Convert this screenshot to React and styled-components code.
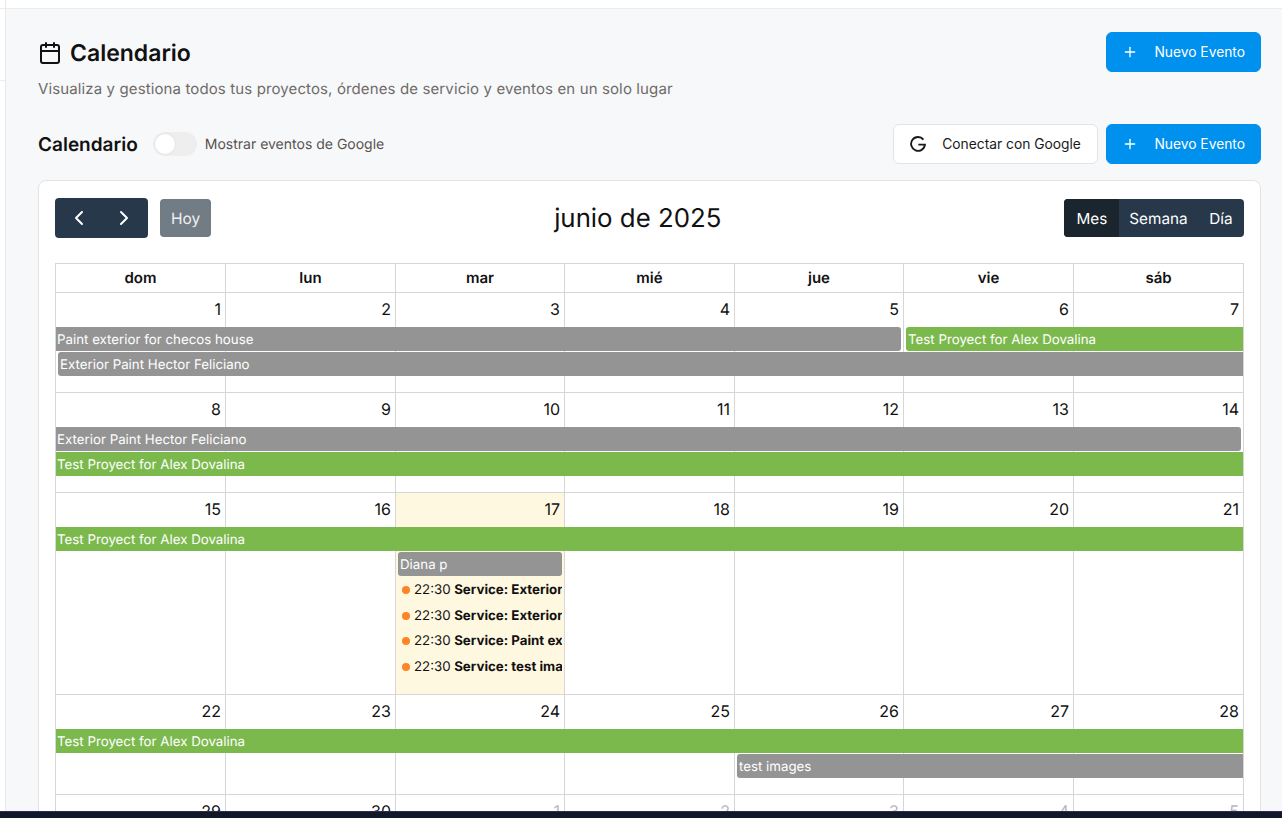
import React from 'react'
import styled, { createGlobalStyle } from 'styled-components'
import { Calendar, Plus, ChevronLeft, ChevronRight } from 'lucide-react'

const GlobalStyle = createGlobalStyle`
  html, body {
    margin: 0;
    height: 100%;
    overflow: hidden;
  }
  body {
    font-family: Inter, "Liberation Sans", sans-serif;
    text-rendering: geometricPrecision;
    color: #111;
    background: #f7f8fa;
  }
  * {
    box-sizing: border-box;
  }
`

const Shell = styled.div`
  height: 100vh;
  display: flex;
  flex-direction: column;
  overflow: hidden;
`

const Body = styled.div`
  flex: 1;
  min-height: 0;
  display: flex;
`

const Sidebar = styled.aside`
  width: 6px;
  flex-shrink: 0;
  background: #fff;
  border-right: 1px solid #e8e8e8;
`

const SidebarRow = styled.div`
  height: ${p => p.$h}px;
  border-bottom: 1px solid #ececec;
`

const Column = styled.div`
  flex: 1;
  min-width: 0;
  display: flex;
  flex-direction: column;
`

const TopBar = styled.div`
  height: 9px;
  flex-shrink: 0;
  background: #fff;
  border-bottom: 1px solid #ececec;
`

const Main = styled.main`
  flex: 1;
  min-height: 0;
  overflow: hidden;
  padding: 23px 21px 0 32px;
`

const HeaderRow = styled.div`
  display: flex;
  justify-content: space-between;
  align-items: flex-start;
`

const TitleRow = styled.div`
  display: flex;
  align-items: center;
  gap: 8px;
  height: 42px;
`

const PageTitle = styled.h1`
  margin: 0;
  font-size: 23px;
  font-weight: 600;
`

const Subtitle = styled.p`
  margin: 4px 0 0;
  font-size: 15px;
  letter-spacing: 0.12px;
  line-height: 22px;
  color: #6f6b68;
`

const Toolbar = styled.div`
  display: flex;
  justify-content: space-between;
  align-items: center;
  margin-top: 24px;
`

const ToolbarLeft = styled.div`
  display: flex;
  align-items: center;
`

const SectionTitle = styled.h2`
  margin: 0 15px 0 0;
  font-size: 19px;
  font-weight: 600;
`

const Toggle = styled.div`
  width: 44px;
  height: 24px;
  padding: 2px;
  border-radius: 12px;
  background: #eeeeee;
  margin-right: 8px;
`

const Thumb = styled.div`
  width: 20px;
  height: 20px;
  border-radius: 50%;
  background: #fff;
  box-shadow: 0 0 3px rgba(0, 0, 0, 0.08);
`

const ToggleLabel = styled.span`
  font-size: 14px;
  color: #57534e;
`

const ButtonRow = styled.div`
  display: flex;
  gap: 8px;
`

const ActionButton = styled.button`
  height: 40px;
  display: flex;
  align-items: center;
  gap: 16px;
  padding: 0 ${p => (p.$primary ? 15 : 16.5)}px 1px;
  border-radius: 6px;
  font-family: inherit;
  font-size: 13.8px;
  font-weight: 400;
  border: 1px solid ${p => (p.$primary ? '#0090ee' : '#e4e4e4')};
  background: ${p => (p.$primary ? '#0090ee' : '#fff')};
  color: ${p => (p.$primary ? '#fff' : '#1a1a1a')};
`

const Card = styled.section`
  margin-top: 16px;
  padding: 17px 16px 0;
  background: #fff;
  border: 1px solid #e6e4e2;
  border-radius: 8px;
`

const CalendarHeader = styled.div`
  display: flex;
  justify-content: space-between;
  align-items: center;
  height: 40px;
  margin-bottom: 25px;
`

const HeaderSide = styled.div`
  display: flex;
  align-items: center;
`

const NavGroup = styled.div`
  display: flex;
  width: 93px;
  height: 40px;
  padding: 0 1px;
  border-radius: 4px;
  background: #27384a;
  color: #fff;
  margin-right: 12px;
`

const NavButton = styled.div`
  flex: 1;
  display: flex;
  align-items: center;
  justify-content: center;
`

const TodayButton = styled.div`
  width: 51px;
  height: 38px;
  display: flex;
  align-items: center;
  justify-content: center;
  border-radius: 4px;
  background: #727c85;
  color: #eef0f1;
  font-size: 15.5px;
`

const MonthTitle = styled.h2`
  margin: 0;
  padding-top: 2px;
  font-size: 25.8px;
  font-weight: 400;
  line-height: 40px;
`

const ViewGroup = styled.div`
  display: flex;
  height: 38px;
  border-radius: 4px;
  overflow: hidden;
  background: #27384a;
`

const ViewButton = styled.div`
  display: flex;
  align-items: center;
  padding: 0 ${p => p.$pad}px;
  font-size: 15.3px;
  color: #fff;
  background: ${p => (p.$active ? '#1a252d' : 'transparent')};
`

const Table = styled.div`
  border-top: 1px solid #d6d6d6;
  border-left: 1px solid #d6d6d6;
`

const SevenColumns = styled.div`
  display: grid;
  grid-template-columns: 170px 170px 169px 170px 169px 170px 170px;
`

const DayName = styled.div`
  height: 29px;
  padding-bottom: 1px;
  display: flex;
  align-items: center;
  justify-content: center;
  font-size: 15px;
  font-weight: 600;
  border-right: 1px solid #d6d6d6;
  border-bottom: 1px solid #d6d6d6;
`

const Week = styled(SevenColumns)`
  grid-template-rows: 34px repeat(${p => p.$rows}, auto) 1fr;
  height: ${p => p.$height}px;
`

const DayCell = styled.div`
  grid-column: ${p => p.$col};
  grid-row: 1 / -1;
  padding: 4px 4px 0 0;
  text-align: right;
  font-size: 16px;
  line-height: 24px;
  color: ${p => (p.$muted ? '#b8b8b8' : '#111')};
  background: ${p => (p.$today ? '#fff8e1' : 'transparent')};
  border-right: 1px solid #d6d6d6;
  border-bottom: 1px solid #d6d6d6;
`

const EventBar = styled.div`
  grid-column: ${p => p.$from} / ${p => p.$to};
  grid-row: ${p => p.$row};
  z-index: 1;
  height: 24px;
  margin: 0 ${p => p.$endGap ?? 1}px 1px ${p => p.$startGap ?? 0}px;
  padding-left: ${p => (p.$startGap ? 2 : 1)}px;
  font-size: 13.3px;
  line-height: 26px;
  color: #fff;
  white-space: nowrap;
  overflow: hidden;
  background: ${p => (p.$green ? '#7cb94d' : '#949494')};
  border-radius: ${p => (p.$startGap ? 3 : 0)}px ${p => (p.$endGap ? 3 : 0)}px ${p => (p.$endGap ? 3 : 0)}px ${p => (p.$startGap ? 3 : 0)}px;
`

const ServiceRow = styled.div`
  grid-column: ${p => p.$col};
  grid-row: ${p => p.$row};
  z-index: 1;
  display: flex;
  align-items: center;
  gap: 3.5px;
  height: 25.5px;
  margin: 0 3px 0 6px;
  padding-top: 1px;
  font-size: 13.3px;
  white-space: nowrap;
  overflow: hidden;
`

const Dot = styled.span`
  flex-shrink: 0;
  width: 8px;
  height: 8px;
  margin-right: 0.5px;
  border-radius: 50%;
  background: #fd8526;
`

const ServiceName = styled.b`
  font-weight: 700;
`

const Footer = styled.div`
  height: 7px;
  flex-shrink: 0;
  background: #111827;
  border-top: 1px solid #2e2a5c;
`

const GoogleIcon = () => (
  <svg width="16" height="16" viewBox="0 0 24 24" fill="none" stroke="currentColor" strokeWidth="2.8">
    <path d="M20.2 5.4A10.4 10.4 0 1 0 22.4 13H12.5" />
  </svg>
)

const dayNames = ['dom', 'lun', 'mar', 'mié', 'jue', 'vie', 'sáb']

const services = [
  'Service: Exterior Paint Hector Feliciano',
  'Service: Exterior Paint Hector Feliciano',
  'Service: Paint exterior for checos house',
  'Service: test images',
]

const weeks = [
  {
    height: 100,
    days: [1, 2, 3, 4, 5, 6, 7],
    rows: 2,
    events: [
      { title: 'Paint exterior for checos house', from: 1, to: 6, row: 2, endGap: 3 },
      { title: 'Test Proyect for Alex Dovalina', from: 6, to: 8, row: 2, startGap: 2, green: true },
      { title: 'Exterior Paint Hector Feliciano', from: 1, to: 8, row: 3, startGap: 2 },
    ],
  },
  {
    height: 100,
    days: [8, 9, 10, 11, 12, 13, 14],
    rows: 2,
    events: [
      { title: 'Exterior Paint Hector Feliciano', from: 1, to: 8, row: 2, endGap: 3 },
      { title: 'Test Proyect for Alex Dovalina', from: 1, to: 8, row: 3, green: true },
    ],
  },
  {
    height: 202,
    days: [15, 16, 17, 18, 19, 20, 21],
    today: 17,
    rows: 6,
    events: [
      { title: 'Test Proyect for Alex Dovalina', from: 1, to: 8, row: 2, green: true },
      { title: 'Diana p', from: 3, to: 4, row: 3, startGap: 2, endGap: 3 },
    ],
    services,
  },
  {
    height: 100,
    days: [22, 23, 24, 25, 26, 27, 28],
    rows: 2,
    events: [
      { title: 'Test Proyect for Alex Dovalina', from: 1, to: 8, row: 2, green: true },
      { title: 'test images', from: 5, to: 8, row: 3, startGap: 2 },
    ],
  },
  {
    height: 100,
    days: [29, 30, 1, 2, 3, 4, 5],
    mutedFrom: 2,
    rows: 1,
    events: [],
  },
]

const App = () => (
  <Shell>
    <GlobalStyle />
    <Body>
      <Sidebar>
        <SidebarRow $h={9} />
        <SidebarRow $h={72} />
      </Sidebar>
      <Column>
        <TopBar />
        <Main>
          <HeaderRow>
            <div>
              <TitleRow>
                <Calendar size={24} strokeWidth={2} />
                <PageTitle>Calendario</PageTitle>
              </TitleRow>
              <Subtitle>Visualiza y gestiona todos tus proyectos, órdenes de servicio y eventos en un solo lugar</Subtitle>
            </div>
            <ActionButton $primary><Plus size={16} />Nuevo Evento</ActionButton>
          </HeaderRow>
          <Toolbar>
            <ToolbarLeft>
              <SectionTitle>Calendario</SectionTitle>
              <Toggle><Thumb /></Toggle>
              <ToggleLabel>Mostrar eventos de Google</ToggleLabel>
            </ToolbarLeft>
            <ButtonRow>
              <ActionButton><GoogleIcon />Conectar con Google</ActionButton>
              <ActionButton $primary><Plus size={16} />Nuevo Evento</ActionButton>
            </ButtonRow>
          </Toolbar>
          <Card>
            <CalendarHeader>
              <HeaderSide>
                <NavGroup>
                  <NavButton><ChevronLeft size={24} /></NavButton>
                  <NavButton><ChevronRight size={24} /></NavButton>
                </NavGroup>
                <TodayButton>Hoy</TodayButton>
              </HeaderSide>
              <MonthTitle>junio de 2025</MonthTitle>
              <ViewGroup>
                <ViewButton $active $pad={12}>Mes</ViewButton>
                <ViewButton $pad={10}>Semana</ViewButton>
                <ViewButton $pad={11.5}>Día</ViewButton>
              </ViewGroup>
            </CalendarHeader>
            <Table>
              <SevenColumns>
                {dayNames.map(name => <DayName key={name}>{name}</DayName>)}
              </SevenColumns>
              {weeks.map(week => (
                <Week key={week.days[0]} $rows={week.rows} $height={week.height}>
                  {week.days.map((day, i) => (
                    <DayCell
                      key={i}
                      $col={i + 1}
                      $today={day === week.today}
                      $muted={week.mutedFrom !== undefined && i >= week.mutedFrom}
                    >
                      {day}
                    </DayCell>
                  ))}
                  {week.events.map(ev => (
                    <EventBar
                      key={ev.title}
                      $from={ev.from}
                      $to={ev.to}
                      $row={ev.row}
                      $green={ev.green}
                      $startGap={ev.startGap}
                      $endGap={ev.endGap}
                    >
                      {ev.title}
                    </EventBar>
                  ))}
                  {week.services && week.services.map((name, i) => (
                    <ServiceRow key={i} $col={3} $row={i + 4}>
                      <Dot />
                      <span>22:30</span>
                      <ServiceName>{name}</ServiceName>
                    </ServiceRow>
                  ))}
                </Week>
              ))}
            </Table>
          </Card>
        </Main>
      </Column>
    </Body>
    <Footer />
  </Shell>
)

export default App
